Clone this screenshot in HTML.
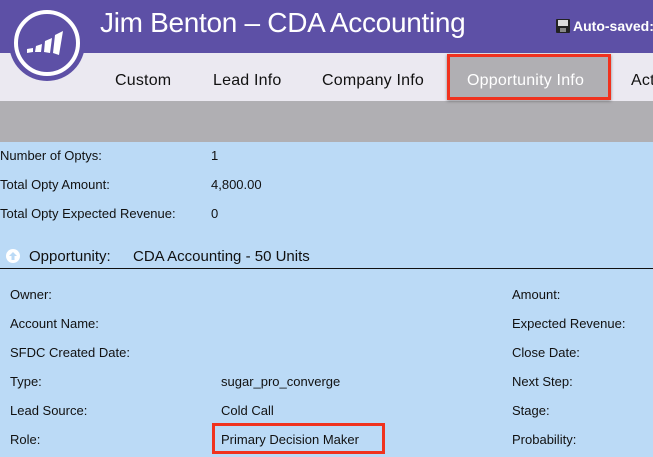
<!DOCTYPE html>
<html><head><style>
body{margin:0;width:653px;height:457px;overflow:hidden;background:#bbdaf6;font-family:"Liberation Sans",sans-serif;position:relative;color:#111}
.hdr{position:absolute;left:0;top:0;width:653px;height:53px;background:#5d50a6}
.nav{position:absolute;left:0;top:53px;width:653px;height:48px;background:#ebe9f1}
.gray{position:absolute;left:0;top:101px;width:653px;height:41px;background:#b0afb3}
.t{position:absolute;white-space:nowrap}
.title{left:100px;top:7px;font-size:28px;color:#fff;letter-spacing:-0.3px}
.nv{top:72px;font-size:16px;color:#111;letter-spacing:0.2px}
.f{font-size:13px}
</style></head><body>
<div class="hdr"></div><div class="nav"></div><div class="gray"></div>
<svg style="position:absolute;left:8px;top:3px" width="80" height="80" viewBox="0 0 80 80">
<circle cx="39" cy="40" r="38" fill="#5d50a6"/>
<circle cx="39" cy="40" r="31" fill="none" stroke="#fff" stroke-width="4"/>
<path d="M19 46 L25 45 L25 49 L19 50Z M28 43 L34 41 L33 49 L27 49Z M37 38 L44 35 L42 50 L36 49Z M47 32 L55 28 L51 52 L45 50Z" fill="#fff"/>
</svg>
<div class="t title">Jim Benton – CDA Accounting</div>
<svg style="position:absolute;left:556px;top:19px" width="14" height="14"><rect width="14" height="14" rx="1" fill="#222"/><rect x="2" y="1" width="10" height="6" fill="#ddd"/><rect x="4" y="9" width="6" height="4" fill="#888"/></svg>
<div class="t" style="left:573px;top:18px;font-size:14px;color:#fff;font-weight:bold">Auto-saved:</div>
<div class="t nv" style="left:115px">Custom</div>
<div class="t nv" style="left:213px">Lead Info</div>
<div class="t nv" style="left:322px">Company Info</div>
<div style="position:absolute;left:447px;top:54px;width:164px;height:46px;background:#b0afb3;border:3px solid #f0321e;box-sizing:border-box;box-shadow:0 1px 3px rgba(0,0,0,.4)"></div>
<div class="t nv" style="left:467px;color:#fff">Opportunity Info</div>
<div class="t nv" style="left:631px">Act</div>
<div class="t f" style="left:0;top:148px">Number of Optys:</div><div class="t f" style="left:211px;top:148px">1</div>
<div class="t f" style="left:0;top:177px">Total Opty Amount:</div><div class="t f" style="left:211px;top:177px">4,800.00</div>
<div class="t f" style="left:0;top:206px">Total Opty Expected Revenue:</div><div class="t f" style="left:211px;top:206px">0</div>
<svg style="position:absolute;left:6px;top:249px" width="14" height="14"><circle cx="7" cy="7" r="7" fill="#fff"/><path d="M7 3 L11 7 H8.5 V11 H5.5 V7 H3Z" fill="#bbdaf6"/></svg>
<div class="t" style="left:29px;top:248px;font-size:15px">Opportunity:</div>
<div class="t" style="left:133px;top:248px;font-size:15px">CDA Accounting - 50 Units</div>
<div style="position:absolute;left:0;top:268px;width:653px;height:1px;background:#111"></div>
<div class="t f" style="left:10px;top:287px">Owner:</div>
<div class="t f" style="left:10px;top:316px">Account Name:</div>
<div class="t f" style="left:10px;top:345px">SFDC Created Date:</div>
<div class="t f" style="left:10px;top:374px">Type:</div><div class="t f" style="left:221px;top:374px">sugar_pro_converge</div>
<div class="t f" style="left:10px;top:403px">Lead Source:</div><div class="t f" style="left:221px;top:403px">Cold Call</div>
<div class="t f" style="left:10px;top:432px">Role:</div>
<div style="position:absolute;left:212px;top:423px;width:173px;height:31px;border:3px solid #f0321e;box-sizing:border-box"></div>
<div class="t f" style="left:221px;top:432px">Primary Decision Maker</div>
<div class="t f" style="left:512px;top:287px">Amount:</div>
<div class="t f" style="left:512px;top:316px">Expected Revenue:</div>
<div class="t f" style="left:512px;top:345px">Close Date:</div>
<div class="t f" style="left:512px;top:374px">Next Step:</div>
<div class="t f" style="left:512px;top:403px">Stage:</div>
<div class="t f" style="left:512px;top:432px">Probability:</div>
</body></html>
